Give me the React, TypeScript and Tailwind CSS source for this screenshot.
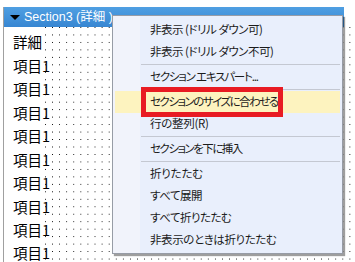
import React from "react";

type Item = { t: string; tr: string } | null;

const items: Item[] = [
  { t: "非表示 (ドリル ダウン可)", tr: "tracking-[-0.5px]" },
  { t: "非表示 (ドリル ダウン不可)", tr: "tracking-[-0.5px]" },
  null,
  { t: "セクション エキスパート...", tr: "tracking-[-1.2px]" },
  null,
  { t: "セクションのサイズに合わせる", tr: "tracking-[-1.5px]" },
  { t: "行の整列(R)", tr: "tracking-[-0.3px]" },
  null,
  { t: "セクションを下に挿入", tr: "tracking-[-1.5px]" },
  null,
  { t: "折りたたむ", tr: "tracking-[-0.2px]" },
  { t: "すべて展開", tr: "tracking-[-0.5px]" },
  { t: "すべて折りたたむ", tr: "tracking-[-0.5px]" },
  { t: "非表示のときは折りたたむ", tr: "tracking-[-0.4px]" },
];

const labels = ["詳細", "項目1", "項目1", "項目1", "項目1", "項目1", "項目1", "項目1", "項目1", "項目1"];

export default function App() {
  return (
    <div className="relative w-[355px] h-[262px] bg-white overflow-hidden font-['Noto_Sans_CJK_JP',sans-serif]">
      <div className="pt-[7px] pl-[3px] h-full">
        <div className="border-l border-[#a0a0a0] h-full flex flex-col">
          <div className="w-[340px] h-[20px] shrink-0 flex items-center bg-[linear-gradient(to_bottom,#4f9fe2,#3786d2)]">
            <div className="ml-[6px] w-0 h-0 border-l-[5.5px] border-r-[5.5px] border-t-[5px] border-l-transparent border-r-transparent border-t-black" />
            <span className="ml-[4px] text-white text-[12.5px] leading-none font-['Liberation_Sans','Noto_Sans_CJK_JP',sans-serif]">
              Section3 (詳細 )
            </span>
          </div>
          <div className="flex flex-1">
            <div className="w-[41px] shrink-0 pt-[4px] flex flex-col">
              {labels.map((l, i) => (
                <div key={i} className="h-[23.44px] flex items-center pl-[9px] text-[14.5px] leading-none text-black whitespace-nowrap">
                  {l}
                </div>
              ))}
            </div>
            <div className="flex-1">
              <svg width="100%" height="100%" className="block">
                <defs>
                  <pattern id="dots" x="0" y="0" width="7.08" height="7.47" patternUnits="userSpaceOnUse">
                    <rect x="0" y="0" width="1" height="1" fill="#000" shapeRendering="crispEdges" />
                  </pattern>
                </defs>
                <rect x="0" y="0" width="100%" height="100%" fill="url(#dots)" />
              </svg>
            </div>
          </div>
        </div>
      </div>

      <div className="absolute left-[112px] top-[15px] w-[231px] h-[239px] border border-[#979ca6] shadow-[2px_2px_1px_rgba(0,0,0,0.38)] bg-[linear-gradient(to_right,#f1f3fb_27px,#e9effc_27px)] pt-[3px] flex flex-col">
        {items.map((it, i) =>
          it === null ? (
            <div key={i} className="h-[3px] flex items-center pl-[28px] pr-[2px]">
              <div className="h-px w-full bg-[#c4c8d2]" />
            </div>
          ) : (
            <div
              key={i}
              className={
                "h-[22px] mx-[2px] flex items-center pl-[35px] text-[11.5px] text-[#1b1b1b] whitespace-nowrap [font-feature-settings:'palt'] " +
                it.tr +
                (i === 5 ? " bg-[#fdf3bf]" : "")
              }
            >
              {it.t}
            </div>
          )
        )}
      </div>

      <div className="absolute left-[141px] top-[87px] w-[142px] h-[30px] border-[5px] border-[#e81b23]" />
    </div>
  );
}
